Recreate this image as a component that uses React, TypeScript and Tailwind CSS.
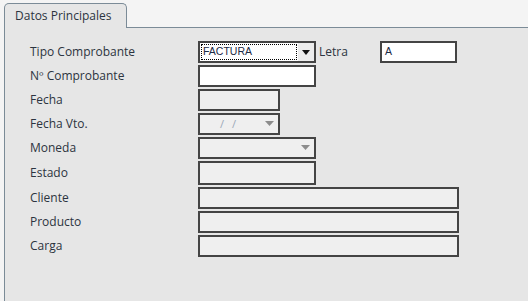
import React from 'react';

type Row = { label: string; kind: 'select' | 'text' | 'short' | 'date' | 'combo' | 'wide'; h?: string };

const rows: Row[] = [
    { label: 'Nº Comprobante', kind: 'text' },
    { label: 'Fecha', kind: 'short' },
    { label: 'Fecha Vto.', kind: 'date' },
    { label: 'Moneda', kind: 'combo' },
    { label: 'Estado', kind: 'text', h: 'h-[24px]' },
    { label: 'Cliente', kind: 'wide' },
    { label: 'Producto', kind: 'wide' },
    { label: 'Carga', kind: 'wide' },
];

function GrayArrow() {
    return (
        <svg width="9" height="6" viewBox="0 0 9 6">
            <path d="M0 0 H9 L4.5 5 Z" fill="#8c8c8c" />
        </svg>
    );
}

function Field({ row }: { row: Row }) {
    const base = 'border-2 border-[#444] bg-[#efefef]';
    if (row.kind === 'text') {
        return <div className={`${base} w-[118px] ${row.h ?? 'h-[22px]'} ${row.label === 'Estado' ? '' : 'bg-white'}`} />;
    }
    if (row.kind === 'short') {
        return <div className={`${base} w-[82px] h-[22px]`} />;
    }
    if (row.kind === 'date') {
        return (
            <div className={`${base} w-[82px] h-[22px] flex items-center pl-[20px] pr-[4px] text-[11px] text-[#9aa8b8]`}>
                <span className="tracking-[8px]">//</span>
                <span className="ml-auto flex"><GrayArrow /></span>
            </div>
        );
    }
    if (row.kind === 'combo') {
        return (
            <div className={`${base} w-[118px] h-[22px] flex items-center justify-end pr-[4px]`}>
                <GrayArrow />
            </div>
        );
    }
    return <div className={`${base} w-[261px] h-[22px]`} />;
}

export default function App() {
    return (
        <div className="w-[528px] h-[301px] bg-[#f4f4f4] flex flex-col overflow-hidden" style={{ fontFamily: '"Open Sans", "Noto Sans", sans-serif' }}>
            <div className="flex pl-[4px] pt-[3px]">
                <div className="relative z-10 -mb-px w-[123px] h-[25px] border border-b-0 border-[#7b8b97] rounded-t-[5px] bg-[#e6e6e6] pl-[10px] pt-[3px] text-[12px] text-[#2c3440]">
                    Datos Principales
                </div>
            </div>
            <div className="flex-1 ml-[4px] border-l border-t border-[#7b8b97] bg-[#e6e6e6] pl-[25px] pt-[13px] text-[12px] text-[#2c3440]">
                <div className="flex items-center h-[22px]">
                    <div className="w-[168px]">Tipo Comprobante</div>
                    <div className="border-2 border-[#444] bg-white w-[118px] h-[22px] flex">
                        <div className="flex-1 m-[1px] border border-dotted border-black flex items-center pl-[1px] text-[10.5px] text-[#1c2a44]" style={{ fontFamily: '"Liberation Sans", sans-serif' }}>
                            FACTURA
                        </div>
                        <div className="w-[16px] bg-[#ececec] flex items-center justify-center">
                            <svg width="8" height="5" viewBox="0 0 8 5">
                                <path d="M0 0 H8 L4 5 Z" fill="#111" />
                            </svg>
                        </div>
                    </div>
                    <div className="ml-[3px] w-[61px]">Letra</div>
                    <div className="border-2 border-[#444] bg-white w-[77px] h-[22px] flex items-center pl-[3px] text-[10.5px] text-[#1c2a44]" style={{ fontFamily: '"Liberation Sans", sans-serif' }}>
                        A
                    </div>
                </div>
                {rows.map(row => (
                    <div key={row.label} className="flex items-center mt-[2px]">
                        <div className="w-[168px]">{row.label}</div>
                        <Field row={row} />
                    </div>
                ))}
            </div>
        </div>
    );
}
